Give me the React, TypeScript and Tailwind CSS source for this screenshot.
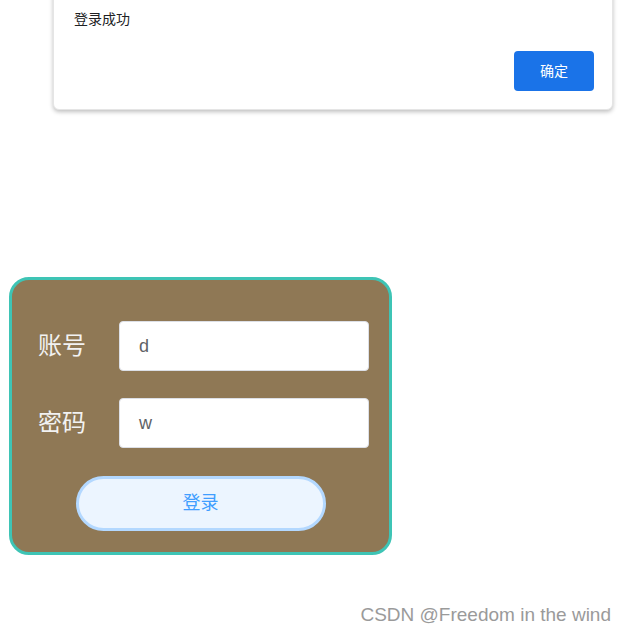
import React from "react";

export default function App() {
  const cjk = { fontFamily: '"Liberation Sans", "Noto Sans CJK SC", sans-serif' };
  return (
    <div className="relative w-[626px] h-[632px] bg-white overflow-hidden" style={cjk}>
      <div className="absolute left-[53px] top-[-10px] w-[560px] h-[120px] bg-white rounded-b-[6px] border border-[#e5e5e5] shadow-[0_2px_4px_rgba(0,0,0,0.25)] pl-[20px] pr-[18px] pt-[17px]">
        <div className="text-[14px] leading-[22px] text-[#202124]">登录成功</div>
        <div className="flex justify-end mt-[21px]">
          <button className="w-[80px] h-[40px] rounded-[4px] bg-[#1a73e8] text-white text-[14px]">确定</button>
        </div>
      </div>

      <div className="pt-[277px] pl-[9px]">
        <div className="w-[383px] h-[278px] bg-[#8f7855] border-[3px] border-[#3ec4b5] rounded-[20px] pt-[41px] flex flex-col">
          <div className="flex items-center pl-[26px]">
            <span className="w-[81px] text-[24px] text-[#f2f2f2] leading-[32px]">账号</span>
            <div className="w-[250px] h-[50px] bg-white border border-[#dcdfe6] rounded-[4px] flex items-center pl-[19px] text-[18px] text-[#606266]">d</div>
          </div>
          <div className="flex items-center pl-[26px] mt-[27px]">
            <span className="w-[81px] text-[24px] text-[#f2f2f2] leading-[32px]">密码</span>
            <div className="w-[250px] h-[50px] bg-white border border-[#dcdfe6] rounded-[4px] flex items-center pl-[19px] text-[18px] text-[#606266]">w</div>
          </div>
          <div className="flex justify-center mt-[28px]">
            <button className="w-[250px] h-[55px] rounded-full bg-[#ecf5ff] border-[3px] border-[#b3d8ff] text-[18px] text-[#409eff]">登录</button>
          </div>
        </div>
      </div>

      <div className="absolute right-[15px] top-[602px] text-[19px] leading-[26px] text-[#9a9a9a]">CSDN @Freedom in the wind</div>
    </div>
  );
}
